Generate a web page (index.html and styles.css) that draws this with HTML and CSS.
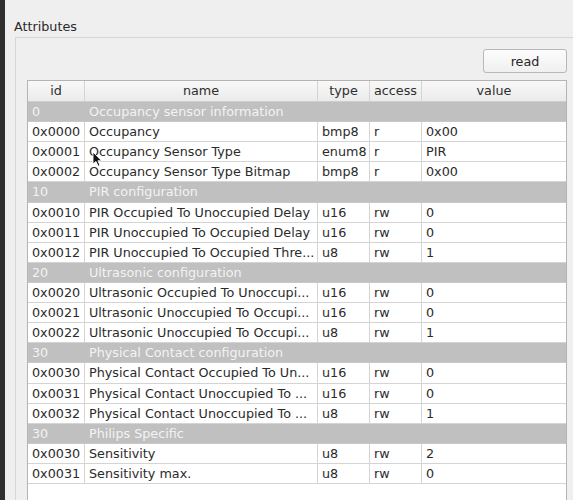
FILE: index.html
```html
<!DOCTYPE html>
<html lang="en">
<head>
    <meta charset="UTF-8">
    <title>Attributes</title>
    <link rel="stylesheet" href="styles.css">
</head>
<body>
    <div class="strip"></div>

    <div class="panel">
        <div class="group-title">Attributes</div>

        <div class="group-box">
            <div class="group-inner">
                <div class="toolbar">
                    <button class="read-button">read</button>
                </div>

                <div class="attr-table">
                    <div class="row header">
                        <div class="cell">id</div>
                        <div class="cell">name</div>
                        <div class="cell">type</div>
                        <div class="cell">access</div>
                        <div class="cell">value</div>
                    </div>

                    <div class="row section">
                        <div class="cell">0</div>
                        <div class="cell wide">Occupancy sensor information</div>
                    </div>
                    <div class="row">
                        <div class="cell">0x0000</div>
                        <div class="cell">Occupancy</div>
                        <div class="cell">bmp8</div>
                        <div class="cell">r</div>
                        <div class="cell">0x00</div>
                    </div>
                    <div class="row">
                        <div class="cell">0x0001</div>
                        <div class="cell">Occupancy Sensor Type</div>
                        <div class="cell">enum8</div>
                        <div class="cell">r</div>
                        <div class="cell">PIR</div>
                    </div>
                    <div class="row">
                        <div class="cell">0x0002</div>
                        <div class="cell">Occupancy Sensor Type Bitmap</div>
                        <div class="cell">bmp8</div>
                        <div class="cell">r</div>
                        <div class="cell">0x00</div>
                    </div>

                    <div class="row section">
                        <div class="cell">10</div>
                        <div class="cell wide">PIR configuration</div>
                    </div>
                    <div class="row">
                        <div class="cell">0x0010</div>
                        <div class="cell">PIR Occupied To Unoccupied Delay</div>
                        <div class="cell">u16</div>
                        <div class="cell">rw</div>
                        <div class="cell">0</div>
                    </div>
                    <div class="row">
                        <div class="cell">0x0011</div>
                        <div class="cell">PIR Unoccupied To Occupied Delay</div>
                        <div class="cell">u16</div>
                        <div class="cell">rw</div>
                        <div class="cell">0</div>
                    </div>
                    <div class="row">
                        <div class="cell">0x0012</div>
                        <div class="cell">PIR Unoccupied To Occupied Thre...</div>
                        <div class="cell">u8</div>
                        <div class="cell">rw</div>
                        <div class="cell">1</div>
                    </div>

                    <div class="row section">
                        <div class="cell">20</div>
                        <div class="cell wide">Ultrasonic configuration</div>
                    </div>
                    <div class="row">
                        <div class="cell">0x0020</div>
                        <div class="cell">Ultrasonic Occupied To Unoccupi...</div>
                        <div class="cell">u16</div>
                        <div class="cell">rw</div>
                        <div class="cell">0</div>
                    </div>
                    <div class="row">
                        <div class="cell">0x0021</div>
                        <div class="cell">Ultrasonic Unoccupied To Occupi...</div>
                        <div class="cell">u16</div>
                        <div class="cell">rw</div>
                        <div class="cell">0</div>
                    </div>
                    <div class="row">
                        <div class="cell">0x0022</div>
                        <div class="cell">Ultrasonic Unoccupied To Occupi...</div>
                        <div class="cell">u8</div>
                        <div class="cell">rw</div>
                        <div class="cell">1</div>
                    </div>

                    <div class="row section">
                        <div class="cell">30</div>
                        <div class="cell wide">Physical Contact configuration</div>
                    </div>
                    <div class="row">
                        <div class="cell">0x0030</div>
                        <div class="cell">Physical Contact Occupied To Un...</div>
                        <div class="cell">u16</div>
                        <div class="cell">rw</div>
                        <div class="cell">0</div>
                    </div>
                    <div class="row">
                        <div class="cell">0x0031</div>
                        <div class="cell">Physical Contact Unoccupied To ...</div>
                        <div class="cell">u16</div>
                        <div class="cell">rw</div>
                        <div class="cell">0</div>
                    </div>
                    <div class="row">
                        <div class="cell">0x0032</div>
                        <div class="cell">Physical Contact Unoccupied To ...</div>
                        <div class="cell">u8</div>
                        <div class="cell">rw</div>
                        <div class="cell">1</div>
                    </div>

                    <div class="row section">
                        <div class="cell">30</div>
                        <div class="cell wide">Philips Specific</div>
                    </div>
                    <div class="row">
                        <div class="cell">0x0030</div>
                        <div class="cell">Sensitivity</div>
                        <div class="cell">u8</div>
                        <div class="cell">rw</div>
                        <div class="cell">2</div>
                    </div>
                    <div class="row">
                        <div class="cell">0x0031</div>
                        <div class="cell">Sensitivity max.</div>
                        <div class="cell">u8</div>
                        <div class="cell">rw</div>
                        <div class="cell">0</div>
                    </div>
                </div>
            </div>
        </div>
    </div>

    <!-- mouse pointer -->
    <svg class="pointer" width="12" height="17" viewBox="0 0 12 17">
        <path d="M1 1 L1 13 L4 10.5 L6.2 15.2 L8 14.4 L5.9 9.8 L9.6 9.8 Z" fill="#111" stroke="#fff" stroke-width="0.9" stroke-linejoin="round"/>
    </svg>
</body>
</html>
```

FILE: styles.css
```css
* {
    margin: 0;
    padding: 0;
    box-sizing: border-box;
}

body {
    font-family: 'DejaVu Sans', 'Liberation Sans', sans-serif;
    font-size: 12.75px;
    color: #2b2b2b;
    background: #efefef;
    width: 573px;
    height: 500px;
    overflow: hidden;
    display: flex;
    position: relative;
}

.strip {
    width: 5px;
    flex-shrink: 0;
    background: #2f2f2f;
}

.panel {
    flex: 1;
    padding: 19px 0 0 9px;
}

.group-title {
    line-height: 15px;
    height: 15px;
    color: #2a2a2a;
}

.group-box {
    margin: 3px -20px 0 1px;
    border: 1px solid #d6d6d6;
    border-right: none;
    border-bottom: none;
    height: 480px;
    padding: 11px 0 0 11px;
}

.group-inner {
    width: 540px;
}

.toolbar {
    display: flex;
    justify-content: flex-end;
    margin-bottom: 7px;
}

.read-button {
    width: 84px;
    height: 24px;
    font-family: inherit;
    font-size: 12.75px;
    color: #262626;
    background: linear-gradient(#fcfcfc, #f0f0f0);
    border: 1px solid #b8b8b8;
    border-radius: 3px;
}

.attr-table {
    width: 540px;
    height: 440px;
    background: #fff;
    border: 1px solid #b4b4b4;
}

.row {
    display: grid;
    grid-template-columns: 57px 233px 52px 52px 1fr;
    height: 20.12px;
    border-bottom: 1px solid #d4d4d4;
}

.cell {
    padding-left: 4px;
    line-height: 20px;
    white-space: nowrap;
    overflow: hidden;
    border-right: 1px solid #d4d4d4;
}

.cell:last-child {
    border-right: none;
}

.header {
    height: 21px;
    background: linear-gradient(#f8f8f8, #ebebeb);
    border-bottom: 1px solid #cdcdcd;
}

.header .cell {
    padding-left: 0;
    text-align: center;
    line-height: 20px;
    color: #2e2e2e;
}

.section {
    background: #c0c0c0;
    border-bottom-color: #c8c8c8;
}

.section .cell {
    color: #f3f3f3;
    border-right: none;
}

.section .wide {
    grid-column: 2 / 6;
}

.pointer {
    position: absolute;
    left: 92px;
    top: 151px;
}
```
